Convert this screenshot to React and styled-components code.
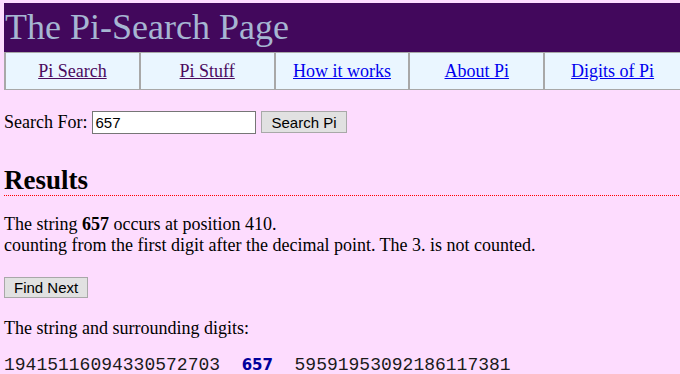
import React from 'react'
import styled, { createGlobalStyle } from 'styled-components'

const GlobalStyle = createGlobalStyle`
  html, body {
    margin: 0;
    padding: 0;
    background: #fddcfe;
    overflow: hidden;
  }
  body {
    padding: 3px 0 0 4px;
    font-family: "Liberation Serif", "Times New Roman", serif;
    font-size: 18px;
    color: #000;
  }
`;

const Header = styled.div`
    width: 677px;
    height: 49px;
    background: #42085c;
    color: #a6b6d2;
    font-size: 36px;
    line-height: 49px;
    padding-left: 1px;
    box-sizing: border-box;
`;

const Nav = styled.div`
    display: grid;
    grid-template-columns: repeat(5, 1fr);
    width: 677px;
    height: 38px;
    background: #eaf6ff;
    border: 1px solid #a8a8a8;
    border-left: 2px solid #a8a8a8;
    box-sizing: border-box;
`;

const NavCell = styled.div`
    display: flex;
    align-items: center;
    justify-content: center;
    border-right: 2px solid #a8a8a8;
    &:last-child {
        border-right: none;
    }
`;

const NavLink = styled.a`
    color: ${props => props.visited ? '#4b0a5e' : '#0000ee'};
    text-decoration: underline;
    font-size: 18px;
`;

const SearchRow = styled.form`
    display: flex;
    align-items: center;
    margin-top: 20px;
    height: 24px;
`;

const Input = styled.input`
    width: 164px;
    height: 23px;
    box-sizing: border-box;
    margin: 0 5px 0 5px;
    border: 1px solid #767676;
    background: #fff;
    font-family: "Liberation Sans", Tahoma, sans-serif;
    font-size: 15px;
    padding: 1px 2px;
`;

const Button = styled.button`
    height: ${props => props.h || 21}px;
    box-sizing: border-box;
    padding: 0 9px;
    border: 1px solid #a8a8a8;
    background: #e1e1e1;
    font-family: "Liberation Sans", Tahoma, sans-serif;
    font-size: 15px;
    color: #000;
`;

const Heading = styled.h2`
    margin: 32px 0 0;
    font-size: 27px;
    font-weight: bold;
    line-height: 29px;
    padding-bottom: 1px;
    width: 676px;
    background: repeating-linear-gradient(to right, #ff0000 0 1px, transparent 1px 2px) bottom / 100% 1px no-repeat;
`;

const Para = styled.p`
    margin: ${props => props.top || 16}px 0 0;
    line-height: 21px;
`;

const ButtonRow = styled.div`
    margin-top: 21px;
    height: 21px;
    display: flex;
`;

const Digits = styled.div`
    margin-top: 16px;
    line-height: 21px;
    font-family: "Liberation Mono", "Courier New", monospace;
    font-size: 18px;
    white-space: pre;
    color: #1a1a1a;
`;

const Hit = styled.span`
    font-family: "DejaVu Sans", Verdana, sans-serif;
    font-size: 15px;
    font-weight: bold;
    color: #00009c;
`;

export default function App() {
    return (
        <>
            <GlobalStyle />
            <Header>The Pi-Search Page</Header>
            <Nav>
                <NavCell><NavLink href="#" visited>Pi Search</NavLink></NavCell>
                <NavCell><NavLink href="#" visited>Pi Stuff</NavLink></NavCell>
                <NavCell><NavLink href="#">How it works</NavLink></NavCell>
                <NavCell><NavLink href="#">About Pi</NavLink></NavCell>
                <NavCell><NavLink href="#">Digits of Pi</NavLink></NavCell>
            </Nav>
            <SearchRow onSubmit={e => e.preventDefault()}>
                Search For:
                <Input defaultValue="657" />
                <Button type="submit" h={22}>Search Pi</Button>
            </SearchRow>
            <Heading>Results</Heading>
            <Para top={18}>
                The string <b>657</b> occurs at position 410.<br />
                counting from the first digit after the decimal point. The 3. is not counted.
            </Para>
            <ButtonRow>
                <Button type="button">Find Next</Button>
            </ButtonRow>
            <Para top={20}>The string and surrounding digits:</Para>
            <Digits>19415116094330572703  <Hit>657</Hit>  59591953092186117381</Digits>
        </>
    )
}
